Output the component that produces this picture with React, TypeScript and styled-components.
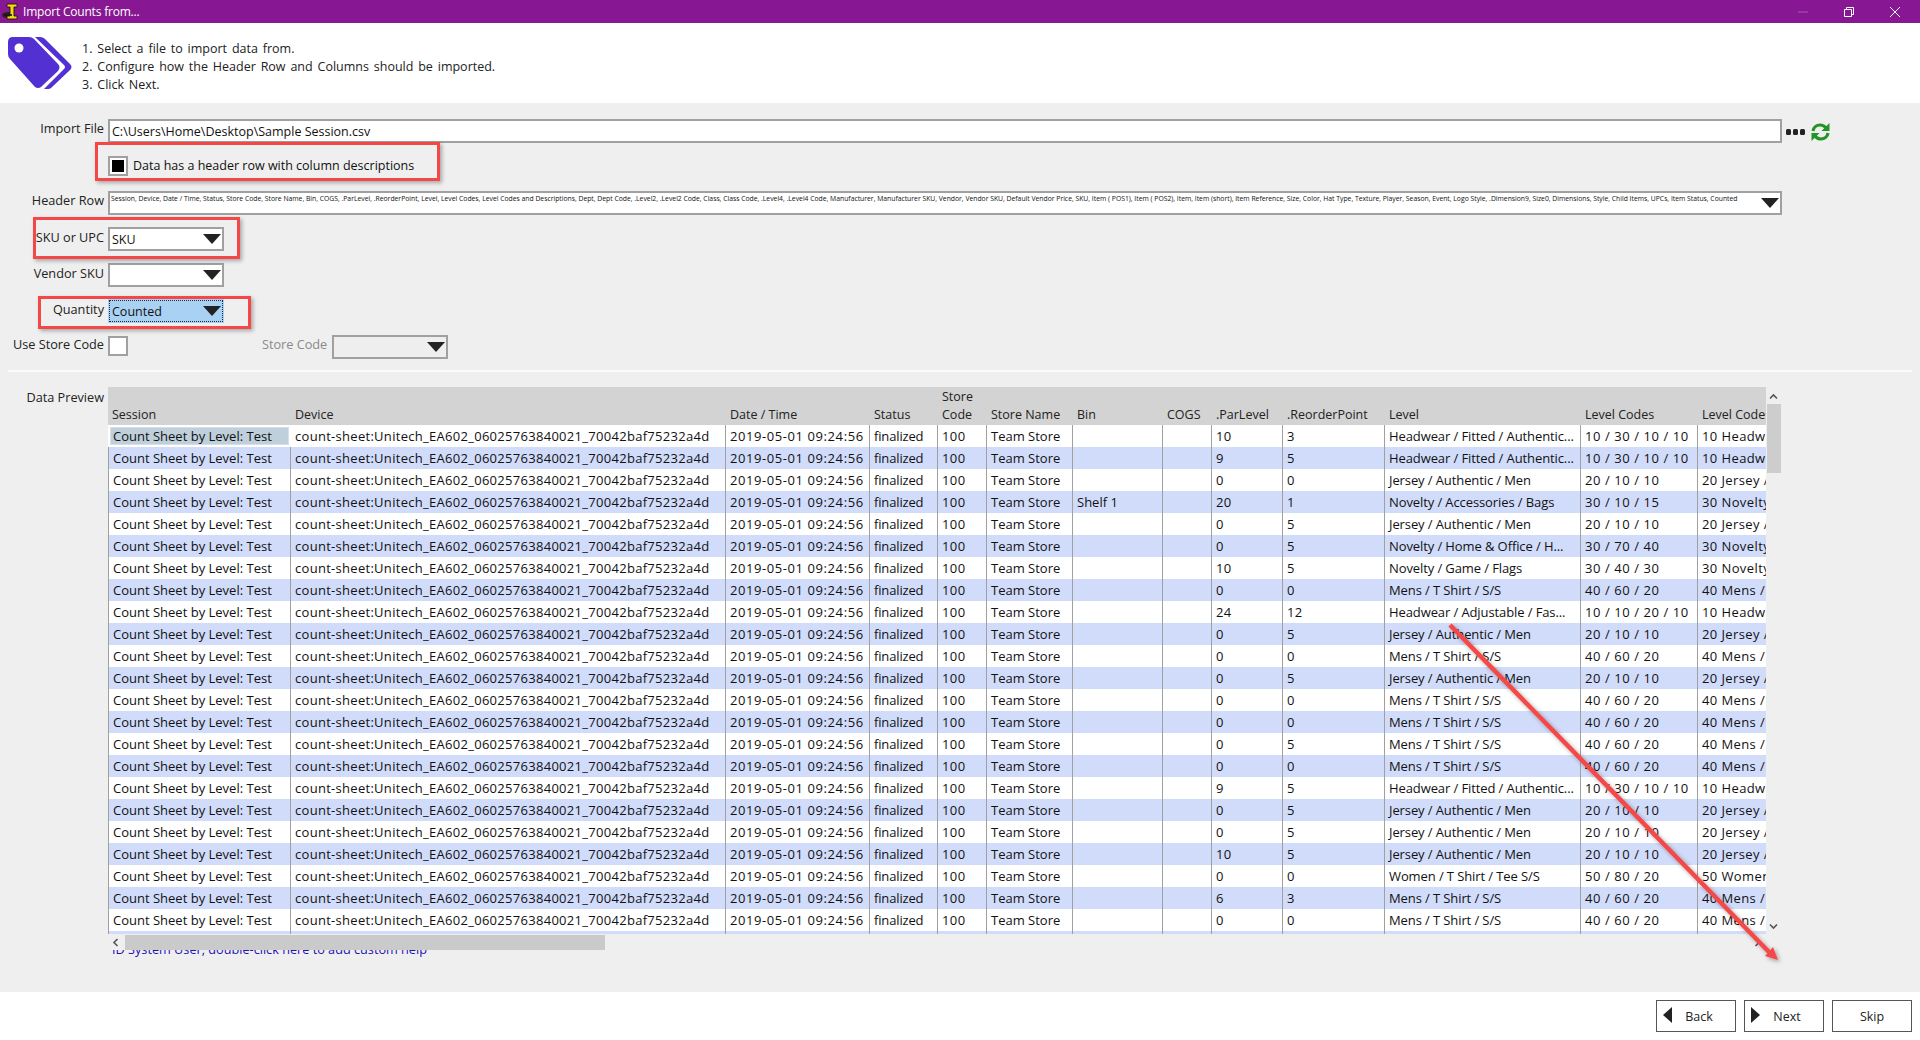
import React from 'react';
import styled, { createGlobalStyle } from 'styled-components';

const UI_FONT = `"Open Sans", "Noto Sans", "Liberation Sans", sans-serif`;

const GlobalStyle = createGlobalStyle`
  html, body {
    margin: 0;
    padding: 0;
    background: #fff;
  }
  body {
    font-family: ${UI_FONT};
    font-size: 12px;
    color: #111;
  }
`;

const Window = styled.div`
  position: relative;
  width: 1920px;
  height: 1040px;
  overflow: hidden;
  display: flex;
  flex-direction: column;
  background: #fff;
`;

const TitleBar = styled.header`
  height: 23px;
  flex: none;
  background: #881793;
  display: flex;
  align-items: center;
  color: #fff;
  padding: 0 2px 0 1px;
`;

const TitleText = styled.span`
  margin-left: 4px;
  font-size: 12px;
  letter-spacing: -0.2px;
`;

const WindowButtons = styled.div`
  margin-left: auto;
  display: flex;
  align-items: center;
`;

const WindowButton = styled.span`
  width: 46px;
  height: 23px;
  display: flex;
  align-items: center;
  justify-content: center;
`;

const Intro = styled.section`
  height: 80px;
  flex: none;
  display: flex;
  align-items: flex-start;
  padding: 14px 0 0 8px;
  box-sizing: border-box;
`;

const Steps = styled.ol`
  margin: 3px 0 0 10px;
  padding: 0;
  list-style: none;
  font-size: 12.5px;
  line-height: 18px;
  word-spacing: 1.6px;
  color: #222;
`;

const Body = styled.main`
  flex: 1;
  min-height: 0;
  background: #efefef;
  display: flex;
  flex-direction: column;
  padding-top: 16px;
  position: relative;
`;

const FormRow = styled.div<{ $h: number }>`
  height: ${(p) => p.$h}px;
  flex: none;
  display: flex;
  align-items: flex-start;
`;

const Label = styled.label<{ $top?: number }>`
  width: 104px;
  flex: none;
  text-align: right;
  font-size: 12.7px;
  line-height: 18px;
  margin-top: ${(p) => p.$top ?? 0}px;
  color: #222;
  white-space: nowrap;
`;

const StoreLabel = styled.span`
  margin-left: 134px;
  width: 66px;
  font-size: 12.7px;
  line-height: 18px;
  color: #8a8a8a;
  white-space: nowrap;
`;

const TextBox = styled.div`
  margin-left: 4px;
  width: 1674px;
  height: 24px;
  box-sizing: border-box;
  border: 2px solid #a0a0a0;
  background: #fff;
  padding: 0 2px;
  font-size: 12.5px;
  line-height: 22px;
  white-space: nowrap;
  overflow: hidden;
`;

const Combo = styled.div<{ $active?: boolean; $disabled?: boolean }>`
  position: relative;
  margin-left: 4px;
  width: 116px;
  height: 24px;
  flex: none;
  box-sizing: border-box;
  border: 2px solid ${(p) => (p.$active ? '#a9d1f3' : '#a0a0a0')};
  outline: ${(p) => (p.$active ? '1px dotted #1c2c3c' : 'none')};
  outline-offset: -2px;
  background: ${(p) => (p.$active ? '#a9d1f3' : p.$disabled ? '#eeeeee' : '#fff')};
  padding: 0 2px;
  font-size: 12.5px;
  line-height: 21px;
  overflow: hidden;
  white-space: nowrap;
`;

const HeaderCombo = styled(Combo)`
  width: 1674px;
  font-size: 6.8px;
  line-height: 12px;
  padding: 0 1px;
`;

const ComboArrow = styled.span`
  position: absolute;
  right: 1px;
  top: 5px;
  width: 0;
  height: 0;
  border-left: 9px solid transparent;
  border-right: 9px solid transparent;
  border-top: 10px solid #222;
`;

const RowTools = styled.div`
  margin-left: 4px;
  height: 26px;
  display: flex;
  align-items: center;
  gap: 6px;
`;

const CheckBox = styled.span<{ $checked?: boolean }>`
  width: 20px;
  height: 20px;
  flex: none;
  box-sizing: border-box;
  border: 2px solid #a0a0a0;
  background: #fff;
  padding: 2px;
  display: block;
  &::after {
    content: '';
    display: ${(p) => (p.$checked ? 'block' : 'none')};
    width: 100%;
    height: 100%;
    background: #000;
  }
`;

const CheckBoxSlot = styled.div`
  margin-left: 4px;
  margin-top: 1px;
`;

const CheckRow = styled.div`
  height: 48px;
  flex: none;
  display: flex;
  align-items: flex-start;
  padding: 13px 0 0 108px;
  box-sizing: border-box;
  gap: 5px;
  font-size: 12.5px;
  line-height: 20px;
`;

const Divider = styled.div`
  height: 2px;
  flex: none;
  margin: 11px 8px 15px;
  background: #fbfbfb;
`;

const PreviewRow = styled.div`
  display: flex;
  align-items: flex-start;
  flex: none;
`;

const PreviewPane = styled.div`
  position: relative;
  margin-left: 4px;
  width: 1674px;
  height: 563px;
  flex: none;
`;

const GridClip = styled.div`
  width: 1658px;
  height: 547px;
  overflow: hidden;
  background: #fff;
`;

const Grid = styled.table`
  table-layout: fixed;
  width: 1790px;
  border-collapse: separate;
  border-spacing: 0;
  font-size: 13px;
`;

const Head = styled.th`
  height: 38px;
  padding: 0 0 1px 4px;
  box-sizing: border-box;
  background: #d3d3d3;
  font-weight: 400;
  text-align: left;
  vertical-align: bottom;
  line-height: 18px;
  font-size: 12.5px;
  color: #222;
  white-space: pre-line;
  overflow: hidden;
`;

const Row = styled.tr<{ $odd: boolean }>`
  background: ${(p) => (p.$odd ? '#d1dcfb' : '#fff')};
`;

const Cell = styled.td<{ $current?: boolean; $track?: number }>`
  height: 22px;
  padding: 1px 0 0 4px;
  box-sizing: border-box;
  border-right: 1px solid #a0a0a0;
  white-space: nowrap;
  overflow: hidden;
  line-height: 21px;
  letter-spacing: ${(p) => p.$track ?? 0}px;
  color: #111;
  position: relative;
  &:first-child {
    border-left: 1px solid #a0a0a0;
  }
  ${(p) =>
    p.$current &&
    `
    isolation: isolate;
    border-color: #fff !important;
    &::before {
      content: '';
      position: absolute;
      z-index: -1;
      inset: 2px 1px;
      background: #bfcfdc;
      border: 1px solid #d5e0e8;
    }
  `}
`;

const VScroll = styled.div`
  position: absolute;
  left: 1658px;
  top: 0;
  width: 16px;
  height: 547px;
  background: #efefef;
`;

const VThumb = styled.div`
  position: absolute;
  top: 17px;
  left: 1px;
  width: 14px;
  height: 69px;
  background: #cdcdcd;
`;

const HScroll = styled.div`
  position: absolute;
  left: 0;
  top: 548px;
  width: 1658px;
  height: 15px;
  background: #efefef;
  z-index: 1;
`;

const HThumb = styled.div`
  position: absolute;
  left: 17px;
  top: 0;
  width: 480px;
  height: 15px;
  background: #cacaca;
`;

const ScrollGlyph = styled.svg<{ $x: number; $y: number }>`
  position: absolute;
  left: ${(p) => p.$x}px;
  top: ${(p) => p.$y}px;
  width: 9px;
  height: 9px;
`;

const HelpText = styled.div`
  position: absolute;
  left: 4px;
  top: 553px;
  font-size: 12.7px;
  line-height: 18px;
  color: #2410b8;
  white-space: nowrap;
`;

const Footer = styled.footer`
  height: 48px;
  flex: none;
  display: flex;
  justify-content: flex-end;
  align-items: flex-start;
  gap: 8px;
  padding: 8px 8px 0 0;
  box-sizing: border-box;
`;

const WizardButton = styled.button<{ $icon?: boolean }>`
  width: 80px;
  height: 32px;
  box-sizing: border-box;
  border: 1.5px solid #555;
  background: #fff;
  font-family: ${UI_FONT};
  font-size: 12.5px;
  color: #222;
  display: flex;
  align-items: center;
  justify-content: center;
  padding: 0 0 0 ${(p) => (p.$icon ? 6 : 0)}px;
  position: relative;
`;

const ButtonGlyph = styled.svg`
  position: absolute;
  left: 6px;
  top: 6px;
  width: 10px;
  height: 16px;
`;

const Callout = styled.div<{ $x: number; $y: number; $w: number; $h: number }>`
  position: absolute;
  z-index: 2;
  left: ${(p) => p.$x}px;
  top: ${(p) => p.$y}px;
  width: ${(p) => p.$w}px;
  height: ${(p) => p.$h}px;
  box-sizing: border-box;
  border: 3px solid #f44848;
  box-shadow: 2px 2px 4px rgba(0, 0, 0, 0.3);
  pointer-events: none;
`;

const CalloutArrow = styled.svg`
  position: absolute;
  z-index: 2;
  left: 1430px;
  top: 610px;
  width: 370px;
  height: 370px;
  overflow: visible;
  pointer-events: none;
`;

const columns = [
  { title: 'Session', w: 183 },
  { title: 'Device', w: 435 },
  { title: 'Date / Time', w: 144 },
  { title: 'Status', w: 68 },
  { title: 'Store\nCode', w: 49 },
  { title: 'Store Name', w: 86 },
  { title: 'Bin', w: 90 },
  { title: 'COGS', w: 49 },
  { title: '.ParLevel', w: 71 },
  { title: '.ReorderPoint', w: 102 },
  { title: 'Level', w: 196 },
  { title: 'Level Codes', w: 117 },
  { title: 'Level Codes and Descriptions', w: 200 },
];

const HF = ['Headwear / Fitted / Authentic...', '10 / 30 / 10 / 10', '10 Headwear / Fitted'];
const JA = ['Jersey / Authentic / Men', '20 / 10 / 10', '20 Jersey / Authentic'];
const MT = ['Mens / T Shirt / S/S', '40 / 60 / 20', '40 Mens / T Shirt'];

const rows: { bin?: string; par: string; re: string; lv: string[] }[] = [
  { par: '10', re: '3', lv: HF },
  { par: '9', re: '5', lv: HF },
  { par: '0', re: '0', lv: JA },
  { bin: 'Shelf 1', par: '20', re: '1', lv: ['Novelty / Accessories / Bags', '30 / 10 / 15', '30 Novelty / Accessories'] },
  { par: '0', re: '5', lv: JA },
  { par: '0', re: '5', lv: ['Novelty / Home & Office / H...', '30 / 70 / 40', '30 Novelty / Home'] },
  { par: '10', re: '5', lv: ['Novelty / Game / Flags', '30 / 40 / 30', '30 Novelty / Game'] },
  { par: '0', re: '0', lv: MT },
  { par: '24', re: '12', lv: ['Headwear / Adjustable / Fas...', '10 / 10 / 20 / 10', '10 Headwear / Adjustable'] },
  { par: '0', re: '5', lv: JA },
  { par: '0', re: '0', lv: MT },
  { par: '0', re: '5', lv: JA },
  { par: '0', re: '0', lv: MT },
  { par: '0', re: '0', lv: MT },
  { par: '0', re: '5', lv: MT },
  { par: '0', re: '0', lv: MT },
  { par: '9', re: '5', lv: HF },
  { par: '0', re: '5', lv: JA },
  { par: '0', re: '5', lv: JA },
  { par: '10', re: '5', lv: JA },
  { par: '0', re: '0', lv: ['Women / T Shirt / Tee S/S', '50 / 80 / 20', '50 Women / T Shirt'] },
  { par: '6', re: '3', lv: MT },
  { par: '0', re: '0', lv: MT },
];

const HEADER_ROW =
  'Session, Device, Date / Time, Status, Store Code, Store Name, Bin, COGS, .ParLevel, .ReorderPoint, Level, Level Codes, Level Codes and Descriptions, Dept, Dept Code, .Level2, .Level2 Code, Class, Class Code, .Level4, .Level4 Code, Manufacturer, Manufacturer SKU, Vendor, Vendor SKU, Default Vendor Price, SKU, Item ( POS1), Item ( POS2), Item, Item (short), Item Reference, Size, Color, Hat Type, Texture, Player, Season, Event, Logo Style, .Dimension9, Size0, Dimensions, Style, Child Items, UPCs, Item Status, Counted';

const App: React.FC = () => {
  return (
    <Window>
      <GlobalStyle />
      <TitleBar>
        <svg width="18" height="20" viewBox="0 0 18 20">
          <path d="M1 13c0-2 3-3 6-3h6v3c-2 2-4 3-7 3-3 0-5-1-5-3z" fill="#2a2222" />
          <path
            d="M6 2h10v3h-3v9h3v3H6v-3h3V5H6z"
            fill="#f4d80f"
            stroke="#1c1616"
            strokeWidth="0.9"
          />
          <path d="M3 13h8" stroke="#1c1616" strokeWidth="1.6" />
        </svg>
        <TitleText>Import Counts from...</TitleText>
        <WindowButtons>
          <WindowButton>
            <svg width="10" height="10" viewBox="0 0 10 10">
              <path d="M0 5h10" stroke="#a65cae" strokeWidth="1" />
            </svg>
          </WindowButton>
          <WindowButton>
            <svg width="10" height="10" viewBox="0 0 10 10" fill="none" stroke="#fff">
              <path d="M.5 2.500h7v7h-7zM2.500 2.500v-2h7v7h-2" />
            </svg>
          </WindowButton>
          <WindowButton>
            <svg width="10" height="10" viewBox="0 0 10 10" stroke="#fff" strokeWidth="1">
              <path d="M0 0l10 10M10 0L0 10" />
            </svg>
          </WindowButton>
        </WindowButtons>
      </TitleBar>

      <Intro>
        <svg width="64" height="52" viewBox="0 0 64 52">
          <path
            d="M5 0H21Q24 0 26 2L50 27Q53 30 50 34L33 50Q30 52 27 50L2 22Q0 20 0 17V5Q0 0 5 0z"
            fill="#5230d2"
          />
          <circle cx="11" cy="11" r="4.500" fill="#fff" />
          <path d="M27 0H32Q35 0 37 2L62 27Q65 30 62 33L43 51Q42 52 40 52H36L56 32Q58 30 56 28z" fill="#5230d2" />
        </svg>
        <Steps>
          <li>1. Select a file to import data from.</li>
          <li>2. Configure how the Header Row and Columns should be imported.</li>
          <li>3. Click Next.</li>
        </Steps>
      </Intro>

      <Body>
        <FormRow $h={24}>
          <Label>Import File</Label>
          <TextBox>C:\Users\Home\Desktop\Sample Session.csv</TextBox>
          <RowTools>
            <svg width="19" height="6" viewBox="0 0 19 6" fill="#222">
              <rect x="0" y="0" width="5" height="6" rx="1.500" />
              <rect x="7" y="0" width="5" height="6" rx="1.500" />
              <rect x="14" y="0" width="5" height="6" rx="1.500" />
            </svg>
            <svg width="19" height="20" viewBox="0 0 19 20" fill="none">
              <path d="M2 9c.5-3.500 3.500-6 7-6 2.500 0 4.500 1 6 3" stroke="#249428" strokeWidth="3.200" />
              <path d="M18.500 1v8h-8z" fill="#249428" />
              <path d="M17 11c-.5 3.500-3.500 6-7 6-2.500 0-4.500-1-6-3" stroke="#249428" strokeWidth="3.200" />
              <path d="M.5 19v-8h8z" fill="#249428" />
            </svg>
          </RowTools>
        </FormRow>
        <CheckRow>
          <CheckBox $checked />
          <span>Data has a header row with column descriptions</span>
        </CheckRow>
        <FormRow $h={36}>
          <Label>Header Row</Label>
          <HeaderCombo>
            {HEADER_ROW}
            <ComboArrow />
          </HeaderCombo>
        </FormRow>
        <FormRow $h={36}>
          <Label $top={1}>SKU or UPC</Label>
          <Combo>
            SKU
            <ComboArrow />
          </Combo>
        </FormRow>
        <FormRow $h={36}>
          <Label $top={1}>Vendor SKU</Label>
          <Combo>
            <ComboArrow />
          </Combo>
        </FormRow>
        <FormRow $h={36}>
          <Label $top={1}>Quantity</Label>
          <Combo $active>
            Counted
            <ComboArrow />
          </Combo>
        </FormRow>
        <FormRow $h={24}>
          <Label>Use Store Code</Label>
          <CheckBoxSlot>
            <CheckBox />
          </CheckBoxSlot>
          <StoreLabel>Store Code</StoreLabel>
          <Combo $disabled>
            <ComboArrow />
          </Combo>
        </FormRow>
        <Divider />
        <PreviewRow>
          <Label $top={1}>Data Preview</Label>
          <PreviewPane>
            <GridClip>
              <Grid>
                <colgroup>
                  {columns.map((c) => (
                    <col key={c.title} style={{ width: c.w }} />
                  ))}
                </colgroup>
                <thead>
                  <tr>
                    {columns.map((c) => (
                      <Head key={c.title}>{c.title}</Head>
                    ))}
                  </tr>
                </thead>
                <tbody>
                  {rows.map((r, i) => (
                    <Row key={i} $odd={i % 2 === 1}>
                      <Cell $current={i === 0}>Count Sheet by Level: Test</Cell>
                      <Cell $track={0.29}>count-sheet:Unitech_EA602_06025763840021_70042baf75232a4d</Cell>
                      <Cell $track={0.58}>2019-05-01 09:24:56</Cell>
                      <Cell $track={-0.15}>finalized</Cell>
                      <Cell $track={0.4}>100</Cell>
                      <Cell>Team Store</Cell>
                      <Cell>{r.bin}</Cell>
                      <Cell />
                      <Cell $track={0.4}>{r.par}</Cell>
                      <Cell $track={0.4}>{r.re}</Cell>
                      <Cell $track={-0.1}>{r.lv[0]}</Cell>
                      <Cell $track={0.58}>{r.lv[1]}</Cell>
                      <Cell $track={0.4}>{r.lv[2]}</Cell>
                    </Row>
                  ))}
                  <Row $odd>
                    {columns.map((c) => (
                      <Cell key={c.title} />
                    ))}
                  </Row>
                </tbody>
              </Grid>
            </GridClip>
            <VScroll>
              <ScrollGlyph $x={3} $y={5} viewBox="0 0 9 9">
                <path d="M1 6.500l3.500-3.500L8 6.500" fill="none" stroke="#555" strokeWidth="1.600" />
              </ScrollGlyph>
              <VThumb />
              <ScrollGlyph $x={3} $y={535} viewBox="0 0 9 9">
                <path d="M1 2.500L4.500 6 8 2.500" fill="none" stroke="#555" strokeWidth="1.600" />
              </ScrollGlyph>
            </VScroll>
            <HelpText>ID System User, double-click here to add custom help</HelpText>
            <HScroll>
              <ScrollGlyph $x={3} $y={3} viewBox="0 0 9 9">
                <path d="M6.500 1L3 4.500 6.500 8" fill="none" stroke="#555" strokeWidth="1.600" />
              </ScrollGlyph>
              <HThumb />
              <ScrollGlyph $x={1645} $y={3} viewBox="0 0 9 9">
                <path d="M2.500 1L6 4.500 2.500 8" fill="none" stroke="#555" strokeWidth="1.600" />
              </ScrollGlyph>
            </HScroll>
          </PreviewPane>
        </PreviewRow>
      </Body>

      <Footer>
        <WizardButton $icon>
          <ButtonGlyph viewBox="0 0 10 16">
            <path d="M9 0v16L0 8z" fill="#222" />
          </ButtonGlyph>
          Back
        </WizardButton>
        <WizardButton $icon>
          <ButtonGlyph viewBox="0 0 10 16">
            <path d="M0 0v16l9-8z" fill="#222" />
          </ButtonGlyph>
          Next
        </WizardButton>
        <WizardButton>Skip</WizardButton>
      </Footer>

      <Callout $x={95} $y={142} $w={345} $h={39} />
      <Callout $x={33} $y={217} $w={207} $h={42} />
      <Callout $x={38} $y={296} $w={213} $h={33} />
      <CalloutArrow viewBox="0 0 370 370">
        <defs>
          <filter id="arrow-shadow" x="-10%" y="-10%" width="120%" height="120%">
            <feDropShadow dx="2" dy="2" stdDeviation="2" floodOpacity="0.35" />
          </filter>
        </defs>
        <g filter="url(#arrow-shadow)">
          <path d="M20 15L339 342" stroke="#f44848" strokeWidth="4.500" fill="none" />
          <path d="M348 350L335 346L343 337z" fill="#f44848" />
        </g>
      </CalloutArrow>
    </Window>
  );
};

export default App;
